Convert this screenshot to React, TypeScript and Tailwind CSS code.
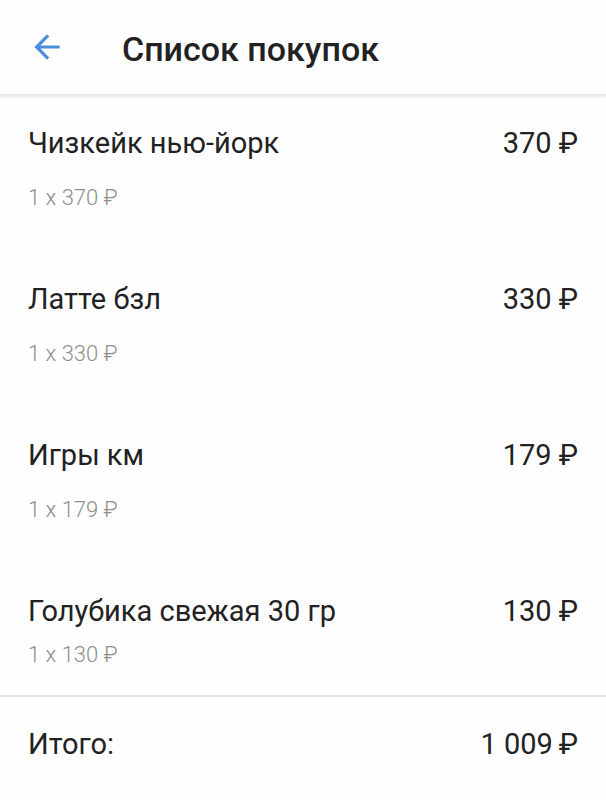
import React from "react";

const items = [
  { name: "Чизкейк нью-йорк", price: "370 ₽", sub: "1 x 370 ₽" },
  { name: "Латте бзл", price: "330 ₽", sub: "1 x 330 ₽" },
  { name: "Игры км", price: "179 ₽", sub: "1 x 179 ₽" },
];

export default function App() {
  return (
    <div
      className="w-[606px] h-[800px] bg-[#fefefe] text-[#222] overflow-hidden"
      style={{ fontFamily: "Roboto, 'Noto Sans', sans-serif" }}
    >
      <header className="h-[95px] flex items-center pl-[28px] pt-[3px] bg-[#fefefe] shadow-[0_2px_3px_rgba(0,0,0,0.10)] border-b border-[#e6e6e6]">
        <svg width="38" height="38" viewBox="0 0 24 24" className="shrink-0 -mt-[3px]">
          <path
            d="M20 11H7.83l5.59-5.59L12 4l-8 8 8 8 1.41-1.41L7.83 13H20v-2z"
            fill="#4a8ede"
          />
        </svg>
        <h1 className="ml-[56px] text-[34px] font-medium leading-[36px] text-[#222]">
          Список покупок
        </h1>
      </header>

      <div className="pt-[31px] px-[28px]">
        {items.map((it) => (
          <div key={it.name} className="mb-[71px]">
            <div className="flex justify-between items-center h-[36px] text-[29px]">
              <span>{it.name}</span>
              <span>{it.price}</span>
            </div>
            <div className="mt-[21px] h-[28px] flex items-center text-[22px] font-light text-[#8e8e8e]">
              {it.sub}
            </div>
          </div>
        ))}
        <div>
          <div className="flex justify-between items-center h-[36px] text-[29px]">
            <span>Голубика свежая 30 гр</span>
            <span>130 ₽</span>
          </div>
          <div className="mt-[10px] h-[28px] flex items-center text-[22px] font-light text-[#8e8e8e]">
            1 x 130 ₽
          </div>
        </div>
      </div>

      <div className="mt-[27px] border-t-2 border-[#e0e0e0]" />

      <div className="px-[28px] pt-[30px] flex justify-between items-center h-[66px] text-[29px]">
        <span>Итого:</span>
        <span>1 009{"\u2009"}₽</span>
      </div>
    </div>
  );
}
